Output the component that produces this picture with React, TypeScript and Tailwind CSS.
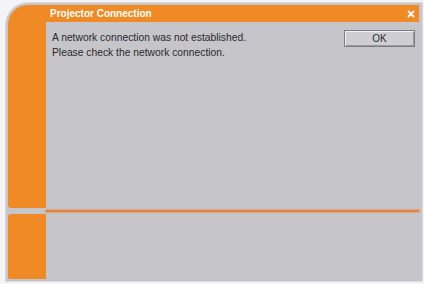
import React from "react";

export default function App() {
  const font = { fontFamily: '"Liberation Sans", Arial, sans-serif' };
  return (
    <div className="w-[424px] h-[284px] bg-[#f4f4f6] pt-[3px] pl-[6px]" style={font}>
      <div className="w-[416px] h-[278px] bg-[#c6c5ca] rounded-tl-[22px] pt-[2px] pl-[2px] pr-[3px] pb-[2px] flex flex-col shadow-[0_0_0_1px_#dcdce0]">
        {/* upper panel */}
        <div className="h-[203px] bg-[#ef8a25] rounded-tl-[20px] rounded-bl-[3px] flex flex-col">
          <div className="h-[17px] flex items-center pl-[42px] pr-[3px]">
            <span className="text-white font-bold text-[10px] leading-none">Projector Connection</span>
            <div className="flex-1" />
            <svg width="8" height="8" viewBox="0 0 8 8" className="mr-[1px]">
              <path d="M1 1 L7 7 M7 1 L1 7" stroke="#fff" strokeWidth="1.8" />
            </svg>
          </div>
          <div className="flex-1 flex">
            <div className="w-[38px]" />
            <div className="flex-1 bg-[#c6c5ca] flex pl-[6px] pt-[8px] pr-[4px]">
              <div className="flex-1 text-[10.3px] leading-[15px] text-[#2a2a2a]">
                <div>A network connection was not established.</div>
                <div>Please check the network connection.</div>
              </div>
              <div className="w-[71px] h-[17px] border border-[#7c7c80] bg-[#cfced3] shadow-[inset_1px_1px_0_#f2f2f4,inset_-1px_-1px_0_#9a9a9e] flex items-center justify-center text-[10px] text-[#2a2a2a]">
                OK
              </div>
            </div>
          </div>
        </div>
        {/* divider */}
        <div className="h-[6px] flex items-center pl-[38px]">
          <div className="flex-1 h-[2px] bg-[#d8864a] shadow-[0_0_1px_1px_#e2a67c]" />
        </div>
        {/* lower panel */}
        <div className="flex-1 flex">
          <div className="w-[38px] bg-[#ef8a25] rounded-tl-[3px] rounded-bl-[2px]" />
          <div className="flex-1" />
        </div>
      </div>
    </div>
  );
}
